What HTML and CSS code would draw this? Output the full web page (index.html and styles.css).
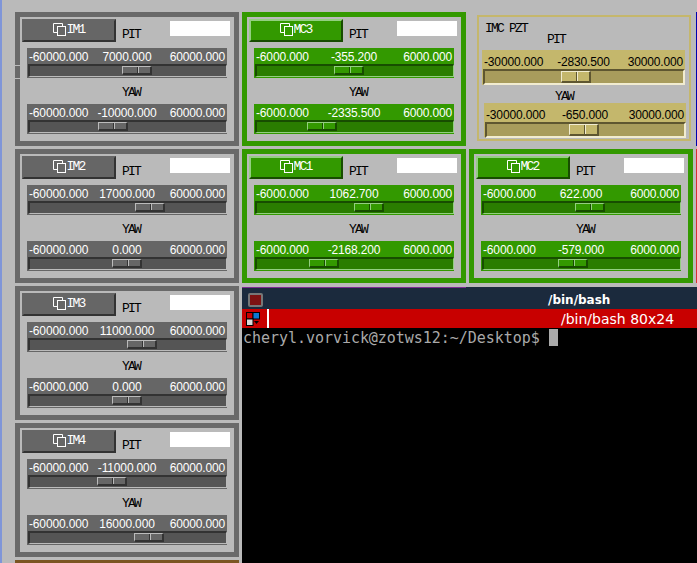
FILE: index.html
```html
<!DOCTYPE html>
<html lang="en">
<head>
<meta charset="utf-8">
<title>Suspension overview</title>
<link rel="stylesheet" href="styles.css">
</head>
<body>
<svg class="defs" width="0" height="0" aria-hidden="true"><defs>
<symbol id="stack" viewBox="0 0 13 13"><path d="M9.5 3.5V.5H.5V9.5H4" fill="none" stroke="currentColor"/><rect x="4.5" y="3.5" width="8" height="9" fill="none" stroke="currentColor"/></symbol>
</defs></svg>
<main class="desktop">

<section class="panel grey glitch">
  <div class="head"><button class="btn"><svg class="ico"><use href="#stack"/></svg>IM1</button><span class="lbl">PIT</span><span class="box"></span></div>
  <div class="slider"><div class="vals"><span>-60000.000</span><span>7000.000</span><span>60000.000</span></div><div class="track"><i class="thumb" style="margin-left:92px"></i></div></div>
  <div class="yaw">YAW</div>
  <div class="slider"><div class="vals"><span>-60000.000</span><span>-10000.000</span><span>60000.000</span></div><div class="track"><i class="thumb" style="margin-left:68px"></i></div></div>
</section>

<section class="panel green">
  <div class="head"><button class="btn"><svg class="ico"><use href="#stack"/></svg>MC3</button><span class="lbl">PIT</span><span class="box"></span></div>
  <div class="slider"><div class="vals"><span>-6000.000</span><span>-355.200</span><span>6000.000</span></div><div class="track"><i class="thumb" style="margin-left:77px"></i></div></div>
  <div class="yaw">YAW</div>
  <div class="slider"><div class="vals"><span>-6000.000</span><span>-2335.500</span><span>6000.000</span></div><div class="track"><i class="thumb" style="margin-left:50px"></i></div></div>
</section>

<section class="pzt">
  <div class="pzt-title">IMC PZT</div>
  <div class="pzt-lbl">PIT</div>
  <div class="slider tan first"><div class="vals"><span>-30000.000</span><span>-2830.500</span><span>30000.000</span></div><div class="track"><i class="thumb" style="margin-left:76px"></i></div></div>
  <div class="pzt-yaw">YAW</div>
  <div class="slider tan second"><div class="vals"><span>-30000.000</span><span>-650.000</span><span>30000.000</span></div><div class="track"><i class="thumb" style="margin-left:82px"></i></div></div>
</section>

<div class="edge edge-blue"></div>

<section class="panel grey">
  <div class="head"><button class="btn"><svg class="ico"><use href="#stack"/></svg>IM2</button><span class="lbl">PIT</span><span class="box"></span></div>
  <div class="slider"><div class="vals"><span>-60000.000</span><span>17000.000</span><span>60000.000</span></div><div class="track"><i class="thumb" style="margin-left:105px"></i></div></div>
  <div class="yaw">YAW</div>
  <div class="slider"><div class="vals"><span>-60000.000</span><span>0.000</span><span>60000.000</span></div><div class="track"><i class="thumb" style="margin-left:82px"></i></div></div>
</section>

<section class="panel green">
  <div class="head"><button class="btn"><svg class="ico"><use href="#stack"/></svg>MC1</button><span class="lbl">PIT</span><span class="box"></span></div>
  <div class="slider"><div class="vals"><span>-6000.000</span><span>1062.700</span><span>6000.000</span></div><div class="track"><i class="thumb" style="margin-left:97px"></i></div></div>
  <div class="yaw">YAW</div>
  <div class="slider"><div class="vals"><span>-6000.000</span><span>-2168.200</span><span>6000.000</span></div><div class="track"><i class="thumb" style="margin-left:52px"></i></div></div>
</section>

<section class="panel green">
  <div class="head"><button class="btn"><svg class="ico"><use href="#stack"/></svg>MC2</button><span class="lbl">PIT</span><span class="box"></span></div>
  <div class="slider"><div class="vals"><span>-6000.000</span><span>622.000</span><span>6000.000</span></div><div class="track"><i class="thumb" style="margin-left:91px"></i></div></div>
  <div class="yaw">YAW</div>
  <div class="slider"><div class="vals"><span>-6000.000</span><span>-579.000</span><span>6000.000</span></div><div class="track"><i class="thumb" style="margin-left:74px"></i></div></div>
</section>

<div class="edge edge-red"></div>

<section class="panel grey">
  <div class="head"><button class="btn"><svg class="ico"><use href="#stack"/></svg>IM3</button><span class="lbl">PIT</span><span class="box"></span></div>
  <div class="slider"><div class="vals"><span>-60000.000</span><span>11000.000</span><span>60000.000</span></div><div class="track"><i class="thumb" style="margin-left:97px"></i></div></div>
  <div class="yaw">YAW</div>
  <div class="slider"><div class="vals"><span>-60000.000</span><span>0.000</span><span>60000.000</span></div><div class="track"><i class="thumb" style="margin-left:82px"></i></div></div>
</section>

<section class="terminal">
  <header class="term-title">
    <span class="term-close"><span class="term-close-in"></span></span>
    <span class="term-title-text">/bin/bash</span>
  </header>
  <div class="term-bar">
    <svg class="term-menu" viewBox="0 0 14 14" aria-hidden="true">
      <rect x=".5" y=".5" width="6.5" height="6.5" fill="#c80000" stroke="#000"/>
      <rect x="7" y=".5" width="6.5" height="6.5" fill="#0a78d0" stroke="#000"/>
      <rect x=".5" y="7" width="6.5" height="6.5" fill="#d8d8d8" stroke="#000"/>
      <path d="M8 9h5l-2.500 3z" fill="#000"/>
    </svg>
    <span class="term-sep"></span>
    <span class="term-bar-text">/bin/bash 80x24</span>
  </div>
  <div class="term-body"><span>cheryl.vorvick@zotws12:~/Desktop$ </span><span class="cursor"></span></div>
</section>

<section class="panel grey">
  <div class="head"><button class="btn"><svg class="ico"><use href="#stack"/></svg>IM4</button><span class="lbl">PIT</span><span class="box"></span></div>
  <div class="slider"><div class="vals"><span>-60000.000</span><span>-11000.000</span><span>60000.000</span></div><div class="track"><i class="thumb" style="margin-left:67px"></i></div></div>
  <div class="yaw">YAW</div>
  <div class="slider"><div class="vals"><span>-60000.000</span><span>16000.000</span><span>60000.000</span></div><div class="track"><i class="thumb" style="margin-left:104px"></i></div></div>
</section>

<div class="brown"></div>

</main>
</body>
</html>
```

FILE: styles.css
```css
html, body {
  margin: 0;
  padding: 0;
  height: 563px;
  overflow: hidden;
  background: #bababa;
}
.defs { position: absolute; }
.desktop {
  display: grid;
  grid-template-columns: 224px 224px 224px 1px;
  grid-template-rows: 134px 134px 134px 134px 20px;
  gap: 3px;
  box-sizing: border-box;
  width: 697px;
  height: 563px;
  padding: 12px 0 0 13px;
  border-left: 2px solid #7f95d8;
  overflow: hidden;
  font: 13px/1 "Liberation Mono", monospace;
  letter-spacing: -1.8px;
}
.panel {
  --edge: #696969;
  --fill: #666;
  --trough: #555;
  --dark: #333;
  --light: #bbb;
  --text: #fff;
  position: relative;
  box-sizing: border-box;
  padding: 2px;
  border: 5px solid var(--edge);
}
.green {
  --edge: #339900;
  --fill: #339900;
  --trough: #2a7d00;
  --dark: #174d00;
  --light: #93cf80;
}
.grey .btn { border-top-color: #666; border-left-color: #666; }
.glitch::before {
  content: "";
  position: absolute;
  left: -5px;
  top: 48px;
  width: 5px;
  height: 12px;
  border: solid #bbb;
  border-width: 1px 0;
}
.head { display: flex; align-items: flex-start; }
.btn {
  display: flex;
  align-items: center;
  justify-content: center;
  box-sizing: border-box;
  width: 94px;
  height: 23px;
  padding: 0 0 2px;
  margin: 0;
  background: var(--fill);
  color: var(--text);
  border: 2px solid;
  border-color: var(--light) var(--dark) var(--dark) var(--light);
  font: inherit;
  letter-spacing: inherit;
}
.ico { width: 13px; height: 13px; color: #fff; }
.lbl { margin: 9px 0 0 6px; width: 28px; color: #000; }
.box { margin: 2px 0 0 20px; width: 60px; height: 15px; background: #fff; }
.slider {
  box-sizing: border-box;
  width: 200px;
  height: 30px;
  margin: 6px 0 0 5px;
  background: var(--fill);
}
.yaw {
  height: 20px;
  margin-left: 100px;
  padding-top: 8px;
  box-sizing: border-box;
  color: #000;
}
.vals {
  display: grid;
  grid-template-columns: 1fr auto 1fr;
  height: 16px;
  padding: 3px 2px 0;
  box-sizing: border-box;
  color: var(--text);
  font: 12px/1 "Liberation Sans", sans-serif;
  letter-spacing: -0.15px;
  white-space: nowrap;
}
.vals span:last-child { text-align: right; }
.track {
  display: flex;
  box-sizing: border-box;
  height: 13px;
  margin: 0 0 0 1px;
  background: var(--trough);
  border: 2px solid;
  border-color: var(--dark) var(--light) var(--light) var(--dark);
  border-bottom-width: 1px;
  border-right-width: 1px;
}
.thumb {
  display: block;
  box-sizing: border-box;
  width: 30px;
  height: 9px;
  background: linear-gradient(90deg, transparent 14px, var(--dark) 14px, var(--dark) 15px, var(--light) 15px, var(--light) 16px, transparent 16px), var(--fill);
  border: 1px solid;
  border-color: var(--light) var(--dark) var(--dark) var(--light);
  border-width: 1px 2px 2px 1px;
}
.pzt {
  box-sizing: border-box;
  margin: 3px 2px 5px 8px;
  padding: 0;
  border: 2px solid #c5b76c;
  color: #000;
  --fill: #c4b76c;
  --trough: #a89c5c;
  --dark: #5e5630;
  --light: #f1ecd0;
  --text: #000;
}
.pzt-title { margin: 5px 0 0 6px; height: 11px; }
.pzt-lbl { margin: 0 0 0 68px; height: 17px; }
.pzt-yaw { margin: 0 0 0 76px; height: 18px; padding-top: 5px; box-sizing: border-box; }
.slider.tan { width: 203px; height: 35px; margin: 0 0 0 3px; }
.slider.second { margin-left: 5px; height: 34px; width: 202px; }
.tan .vals { height: 19px; padding-top: 6px; }
.tan .track { height: 16px; border-bottom-width: 2px; border-right-width: 2px; }
.tan .thumb { height: 12px; }
.edge { width: 1px; }
.edge-blue { background: #0000b0; }
.edge-red { background: #d83030; }
.terminal {
  grid-column: 2 / span 3;
  grid-row: 3 / span 3;
  display: flex;
  flex-direction: column;
  margin-top: 1px;
  background: #000;
  letter-spacing: 0;
  font-family: "DejaVu Sans", sans-serif;
  border-top: 2px solid #1b2a3d;
  position: relative;
}
.terminal::before {
  content: "";
  position: absolute;
  left: 0;
  top: -2px;
  width: 224px;
  height: 1px;
  background: #7d2b93;
}
.term-title {
  display: flex;
  align-items: center;
  flex: none;
  box-sizing: border-box;
  height: 20px;
  padding: 1px 0 0 6px;
  background: #1b2a3d;
  color: #fff;
  font-size: 12px;
  font-weight: bold;
}
.term-close {
  display: flex;
  box-sizing: border-box;
  width: 15px;
  height: 14px;
  padding: 2px;
  border-radius: 2px;
  background: #777;
}
.term-close-in { flex: 1; background: #7d1212; }
.term-title-text { margin-left: 285px; }
.term-bar {
  display: flex;
  align-items: center;
  flex: none;
  height: 19px;
  padding-left: 4px;
  background: #c80000;
  color: #fff;
  font-size: 14px;
}
.term-menu { width: 14px; height: 14px; }
.term-sep { width: 2px; height: 19px; margin-left: 7px; background: #fff; }
.term-bar-text { margin-left: 292px; white-space: pre; }
.term-body {
  display: flex;
  align-items: flex-start;
  height: 220px;
  padding: 1px 0 0 1px;
  color: #aaa;
  font: 15px/18px "DejaVu Sans Mono", monospace;
  letter-spacing: -0.04px;
  white-space: pre;
}
.cursor { width: 9px; height: 17px; background: #aaa; }
.brown {
  grid-column: 1;
  grid-row: 5;
  background: #7b5522;
}
```
